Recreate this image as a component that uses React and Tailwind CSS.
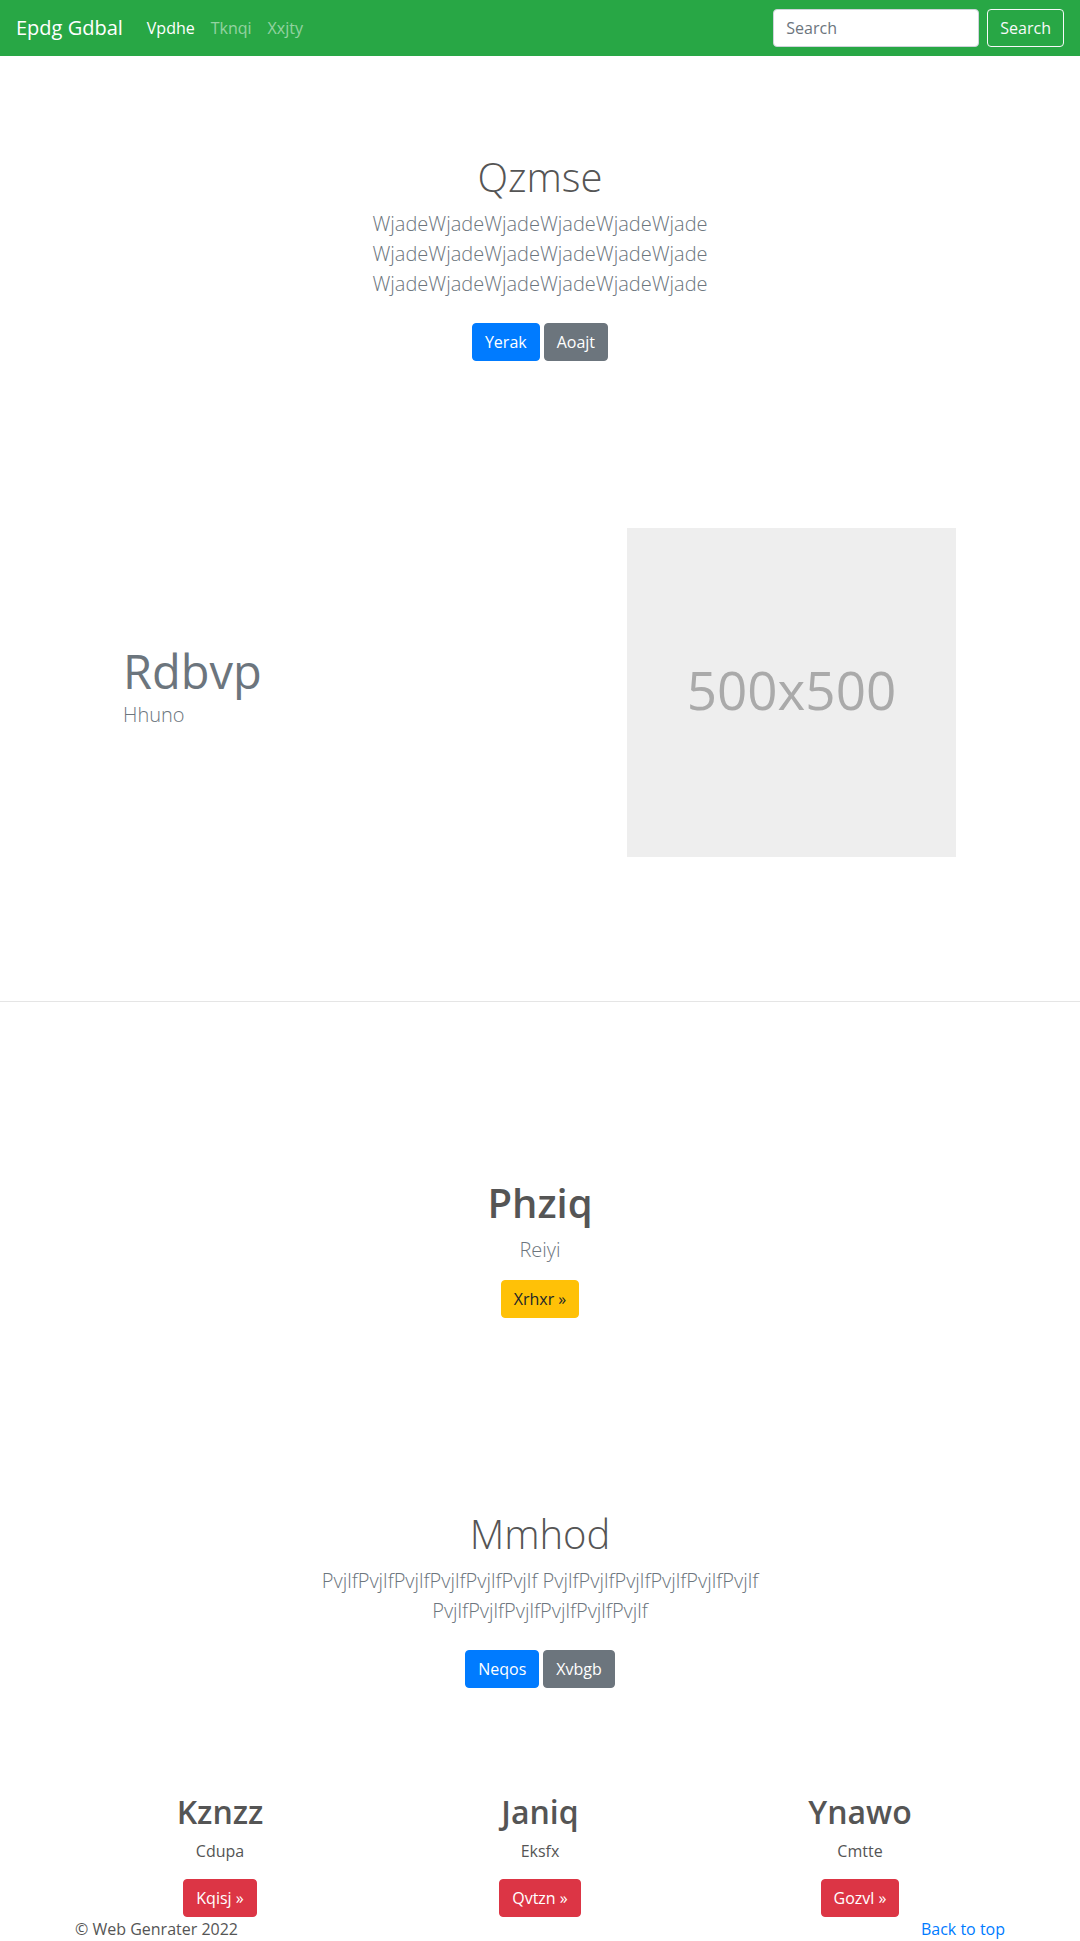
export default function App() {
  const btn = "inline-flex h-[38px] items-center justify-center rounded-[4px] border px-3 text-[16px] leading-[24px]";
  return (
    <div className="min-h-[1941px] bg-white font-['Open_Sans',sans-serif] text-[#555]">
      <nav className="flex h-[56px] items-center justify-between bg-[#28a745] px-4">
        <div className="flex items-center">
          <a className="mr-4 text-[20px] leading-[30px] text-white">Epdg Gdbal</a>
          <a className="px-2 text-[16px] leading-6 text-white">Vpdhe</a>
          <a className="px-2 text-[16px] leading-6 text-white/50">Tknqi</a>
          <a className="px-2 text-[16px] leading-6 text-white/50">Xxjty</a>
        </div>
        <div className="flex items-center">
          <input
            placeholder="Search"
            className="mr-2 h-[38px] w-[206px] rounded-[4px] border border-[#ced4da] bg-white px-3 text-[16px] text-[#495057] outline-none placeholder:text-[#6c757d]"
          />
          <button className={btn + " border-[#f8f9fa] text-[#f8f9fa]"}>Search</button>
        </div>
      </nav>

      <section className="pt-[97px] pb-[167px] text-center">
        <h1 className="mb-2 text-[40px] font-light leading-[48px]">Qzmse</h1>
        <p className="mx-auto w-[500px] text-[20px] font-light leading-[30px] text-[#6c757d]">
          WjadeWjadeWjadeWjadeWjadeWjade WjadeWjadeWjadeWjadeWjadeWjade WjadeWjadeWjadeWjadeWjadeWjade
        </p>
        <div className="mt-6 flex justify-center gap-1">
          <a className={btn + " border-[#007bff] bg-[#007bff] text-white"}>Yerak</a>
          <a className={btn + " border-[#6c757d] bg-[#6c757d] text-white"}>Aoajt</a>
        </div>
      </section>

      <section className="flex pb-[144px]">
        <div className="w-[627px] pl-[123px] pt-[114px]">
          <h2 className="text-[47px] leading-[58px] text-[#6c757d]">Rdbvp</h2>
          <p className="text-[20px] font-light leading-[30px] text-[#6c757d]">Hhuno</p>
        </div>
        <div className="flex h-[329px] w-[329px] items-center justify-center bg-[#eeeeee] pb-[6px] text-[53px] text-[#aaaaaa]">
          500x500
        </div>
      </section>

      <div className="border-t border-[#e5e5e5]" />

      <section className="pt-[177px] text-center">
        <h1 className="mb-2 text-[40px] font-semibold leading-[48px]">Phziq</h1>
        <p className="text-[20px] font-light leading-[30px] text-[#6c757d]">Reiyi</p>
        <div className="mt-[15px] flex justify-center">
          <a className={btn + " border-[#ffc107] bg-[#ffc107] text-[#212529]"}>Xrhxr »</a>
        </div>
      </section>

      <section className="pt-[192px] text-center">
        <h1 className="mb-2 text-[40px] font-light leading-[48px]">Mmhod</h1>
        <p className="mx-auto w-[500px] text-[20px] font-light leading-[30px] text-[#6c757d]">
          PvjlfPvjlfPvjlfPvjlfPvjlfPvjlf PvjlfPvjlfPvjlfPvjlfPvjlfPvjlf PvjlfPvjlfPvjlfPvjlfPvjlfPvjlf
        </p>
        <div className="mt-6 flex justify-center gap-1">
          <a className={btn + " border-[#007bff] bg-[#007bff] text-white"}>Neqos</a>
          <a className={btn + " border-[#6c757d] bg-[#6c757d] text-white"}>Xvbgb</a>
        </div>
      </section>

      <section className="mx-auto grid w-[960px] grid-cols-3 pt-[105px] text-center">
        {[
          ["Kznzz", "Cdupa", "Kqisj »"],
          ["Janiq", "Eksfx", "Qvtzn »"],
          ["Ynawo", "Cmtte", "Gozvl »"],
        ].map(([h, p, b]) => (
          <div key={h}>
            <h2 className="mb-2 text-[32px] font-semibold leading-[38px]">{h}</h2>
            <p className="text-[16px] leading-6">{p}</p>
            <div className="mt-4 flex justify-center">
              <a className={btn + " border-[#dc3545] bg-[#dc3545] text-white"}>{b}</a>
            </div>
          </div>
        ))}
      </section>

      <footer className="mx-auto flex w-[960px] justify-between px-[15px] text-[16px] leading-6">
        <p>© Web Genrater 2022</p>
        <a className="text-[#007bff]">Back to top</a>
      </footer>
    </div>
  );
}
